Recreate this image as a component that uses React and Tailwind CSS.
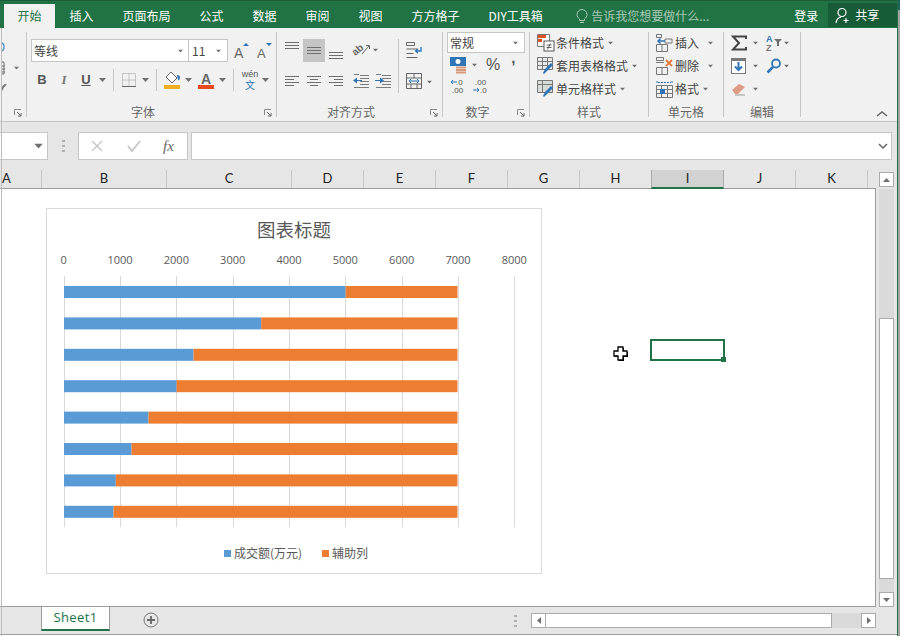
import React from "react";

const bars = [5000, 3500, 2300, 2000, 1500, 1200, 920, 880];
const ticks = [0, 1000, 2000, 3000, 4000, 5000, 6000, 7000, 8000];
const columns = [
  { name: "A", w: "w-[42px]", align: "pl-[2px]" },
  { name: "B", w: "w-[125px]" },
  { name: "C", w: "w-[125px]" },
  { name: "D", w: "w-[72px]" },
  { name: "E", w: "w-[72px]" },
  { name: "F", w: "w-[72px]" },
  { name: "G", w: "w-[72px]" },
  { name: "H", w: "w-[72px]" },
  { name: "I", w: "w-[73px]", active: true },
  { name: "J", w: "w-[72px]" },
  { name: "K", w: "w-[72px]" },
];

const Caret = ({ className = "" }) => (
  <svg width="7" height="4" viewBox="0 0 7 4" className={"shrink-0 " + className}>
    <path d="M0 0h7L3.5 4z" fill="#6f6f6f" />
  </svg>
);

const Launcher = () => (
  <svg width="8" height="8" viewBox="0 0 8 8" className="absolute right-[4px] bottom-0">
    <path d="M.5 6V.5H7" fill="none" stroke="#8a8a8a" />
    <path d="M3 3l4 4M7 4v3H4" fill="none" stroke="#666" />
  </svg>
);

const Lines = ({ rows }) => (
  <svg width="14" height="18" viewBox="0 0 14 18" className="shrink-0">
    {rows.map((r, i) => (
      <path key={i} d={`M${r[0]} ${r[2]}.5H${r[1]}`} stroke="#6e6e6e" />
    ))}
  </svg>
);

const Indent = ({ flip }) => (
  <svg width="16" height="14" viewBox="0 0 16 14" className="shrink-0 mt-[3px]">
    <path d="M7 1.500h9M7 4.500h9M7 7.500h9M7 10.500h9M1 13.500h15M1 .5h5" stroke="#6e6e6e" strokeWidth="0.9" />
    {flip ? (
      <path d="M0 6h5V3.500L9 6.500l-4 3V7H0z" fill="#2f74b5" />
    ) : (
      <path d="M9 6H4V3.500L0 6.500l4 3V7h5z" fill="#2f74b5" />
    )}
  </svg>
);

const TableIcon = ({ children }) => (
  <svg width="18" height="18" viewBox="0 0 18 18" className="shrink-0">
    {children}
  </svg>
);

const Group = ({ w, label, launcher, children }) => (
  <div className={`${w} h-[85px] mt-[4px] relative shrink-0 flex flex-col border-r border-[#c6c6c6]`}>
    <div className="flex-1 min-h-0">{children}</div>
    {label && (
      <div className={`h-[16px] -mb-[3px] text-center text-[12px] leading-[16px] text-[#666666] ${launcher ? "pr-[17px]" : ""}`}>
        {label}
      </div>
    )}
    {launcher && <Launcher />}
  </div>
);

const StyleRow = ({ icon, label, caretGap = "ml-[3px]" }) => (
  <div className="h-[23px] flex items-center pl-[7px]">
    {icon}
    <span className="ml-[1px] text-[12px] text-[#444444] whitespace-nowrap">{label}</span>
    <Caret className={caretGap + " scale-75"} />
  </div>
);

const Scrollbtn = ({ children, className = "" }) => (
  <div className={"bg-white border border-[#ababab] flex items-center justify-center shrink-0 " + className}>{children}</div>
);

function TopBar() {
  const tabs = ["插入", "页面布局", "公式", "数据", "审阅", "视图", "方方格子", "DIY工具箱"];
  return (
    <div className="h-[28px] bg-[#217346] border-t border-[#1a5c38] flex items-end pl-[4px] text-[12px] text-white shrink-0">
      <div className="w-[51px] h-[24px] bg-[#f1f1f1] text-[#217346] flex items-center justify-center">开始</div>
      {tabs.map((t) => (
        <div key={t} className="h-[24px] flex items-center px-[14.5px] whitespace-nowrap">
          {t}
        </div>
      ))}
      <div className="h-[24px] flex items-center ml-[19px] text-[#a6c9b5]">
        <svg width="12" height="16" viewBox="0 0 12 16" className="mr-[3px]">
          <path d="M3.500 11C2 9.800 1 8.300 1 6.500a5 5 0 0 1 10 0c0 1.800-1 3.300-2.500 4.500v1.500h-5z M4 14.500h4" fill="none" stroke="#a6c9b5" />
        </svg>
        <span className="whitespace-nowrap">告诉我您想要做什么...</span>
      </div>
      <div className="h-[24px] flex items-center ml-[85px] whitespace-nowrap">登录</div>
      <div className="h-[24px] w-[69px] ml-[10px] mb-[1px] bg-[#185c37] flex items-center pl-[7px] whitespace-nowrap">
        <svg width="16" height="17" viewBox="0 0 16 17" className="mr-[4px]">
          <circle cx="7" cy="5.500" r="4" fill="none" stroke="#fff" strokeWidth="1.200" />
          <path d="M1 16c.5-3.500 2.500-5.500 5-6M11 11v5M8.500 13.500h5" fill="none" stroke="#fff" strokeWidth="1.200" />
        </svg>
        共享
      </div>
      <div className="flex-1" />
    </div>
  );
}

function Ribbon() {
  return (
    <div className="h-[94px] bg-[#f1f1f1] border-b border-[#c6c6c6] flex shrink-0 text-[#444444]">
      {/* clipboard group, cut off at the window edge */}
      <Group w="w-[27px]" launcher>
        <div className="h-[66px] flex flex-col pl-[1px] pt-[10px] gap-[9px]">
          <svg width="4" height="10" viewBox="0 0 4 10">
            <path d="M0 1c2 0 3 1.500 3 4S2 9 0 9" fill="none" stroke="#4a8ec9" strokeWidth="1.300" />
          </svg>
          <div className="flex items-center h-[14px]">
            <svg width="5" height="14" viewBox="0 0 5 14">
              <path d="M0 1h3v12H0M0 5h4M0 8h4M0 11h4" fill="none" stroke="#707070" />
            </svg>
            <Caret className="ml-[7px] scale-75" />
          </div>
          <svg width="6" height="8" viewBox="0 0 6 8">
            <path d="M5 0L2 3 0 7" fill="none" stroke="#777" strokeWidth="2" />
          </svg>
        </div>
      </Group>

      <Group w="w-[250px]" label="字体" launcher>
        <div className="flex items-center pt-[7px] pl-[4px]">
          <div className="w-[158px] h-[23px] bg-white border border-[#c6c6c6] flex items-center justify-between pl-[2px] pr-[4px] text-[12px] text-[#444444]">
            等线
            <Caret className="scale-75" />
          </div>
          <div className="w-[40px] h-[23px] -ml-[1px] bg-white border border-[#c6c6c6] flex items-center justify-between pl-[3px] pr-[5px] text-[12px] text-[#444444]">
            11
            <Caret className="scale-75" />
          </div>
          <svg width="16" height="16" viewBox="0 0 16 16" className="ml-[6px] overflow-visible">
            <text x="0" y="15" fontSize="14" fill="#666" fontFamily="Liberation Sans">A</text>
            <path d="M9 3l3-3 3 3z" fill="#2f74b5" />
          </svg>
          <svg width="16" height="16" viewBox="0 0 16 16" className="ml-[7px] overflow-visible">
            <text x="0" y="15" fontSize="13" fill="#666" fontFamily="Liberation Sans">A</text>
            <path d="M9 0h6l-3 3z" fill="#2f74b5" />
          </svg>
        </div>
        <div className="flex items-center mt-[7px] pl-[10px] h-[22px]">
          <span className="w-[10px] text-center font-bold text-[13px] text-[#555555]" style={{ fontFamily: "Liberation Sans" }}>B</span>
          <span className="ml-[12px] w-[10px] text-center italic font-bold text-[13px] text-[#777777]" style={{ fontFamily: "Liberation Serif" }}>I</span>
          <span className="ml-[12px] w-[10px] text-center font-bold underline text-[13px] text-[#555555]" style={{ fontFamily: "Liberation Sans" }}>U</span>
          <Caret className="ml-[8px]" />
          <div className="ml-[7px] w-px h-[22px] bg-[#c6c6c6]" />
          <svg width="14" height="14" viewBox="0 0 14 14" className="ml-[8px]">
            <path d="M.5.500h13v13H.5zM7 .5v13M.5 7h13" fill="none" stroke="#9a9a9a" strokeDasharray="1 1" />
            <path d="M0 13.500h14" stroke="#666" />
          </svg>
          <Caret className="ml-[6px]" />
          <div className="ml-[7px] w-px h-[22px] bg-[#c6c6c6]" />
          <svg width="17" height="19" viewBox="0 0 17 19" className="ml-[7px]">
            <path d="M7 1l6 6-5 5-6-6z" fill="#fff" stroke="#666" />
            <path d="M13 4c2 0 3 1 3 2.500 0 1-.5 2-1 3-1-1-1.500-2-2-5.500z" fill="#2f74b5" />
            <rect x="0" y="14" width="16" height="4" fill="#f2b01e" />
          </svg>
          <Caret className="ml-[4px]" />
          <svg width="16" height="19" viewBox="0 0 16 19" className="ml-[6px] overflow-visible">
            <text x="3" y="13" fontSize="14" fontWeight="bold" fill="#666" fontFamily="Liberation Sans">A</text>
            <rect x="0" y="14" width="16" height="4" fill="#e8481c" />
          </svg>
          <Caret className="ml-[5px]" />
          <div className="ml-[7px] w-px h-[22px] bg-[#c6c6c6]" />
          <div className="ml-[8px] w-[16px] flex flex-col items-center leading-none">
            <span className="text-[9px] text-[#555555] leading-[9px]" style={{ fontFamily: "Liberation Sans" }}>wén</span>
            <span className="mt-[1px] text-[10px] text-[#2f74b5] leading-[10px]">文</span>
          </div>
          <Caret className="ml-[4px]" />
        </div>
      </Group>

      <Group w="w-[166px]" label="对齐方式" launcher>
        <div className="flex items-start pt-[7px] pl-[8px] h-[30px]">
          <div className="pt-[3px]">
            <Lines rows={[[0, 14, 0], [0, 14, 3], [0, 14, 6]]} />
          </div>
          <div className="ml-[4px] w-[22px] h-[23px] bg-[#c5c5c5] flex items-center justify-center">
            <Lines rows={[[0, 14, 5], [0, 14, 8], [0, 14, 11]]} />
          </div>
          <div className="ml-[4px] pt-[4px]">
            <Lines rows={[[0, 14, 9], [0, 14, 12], [0, 14, 15]]} />
          </div>
          <svg width="18" height="16" viewBox="0 0 18 16" className="ml-[10px] mt-[3px] overflow-visible">
            <text x="0" y="12" fontSize="10" fill="#666" transform="rotate(-40 4 10)" fontFamily="Liberation Sans" fontWeight="bold">ab</text>
            <path d="M9 12l7-8M13 3.500h3.500V7" fill="none" stroke="#666" />
          </svg>
          <Caret className="ml-[1px] mt-[9px] scale-75" />
          <div className="ml-[19px] w-px h-[32px] bg-[#c6c6c6]" />
          <svg width="17" height="17" viewBox="0 0 17 17" className="ml-[7px] mt-[3px]">
            <path d="M.5.500h8v3h-8zM.5 7h11M.5 11.500h7M.5 15.500h11" fill="none" stroke="#666" />
            <path d="M15 5v4h-5M12 7l-2.500 2 2.500 2" fill="none" stroke="#2f74b5" strokeWidth="1.300" />
          </svg>
        </div>
        <div className="flex items-start mt-[9px] pl-[8px] h-[30px]">
          <Lines rows={[[0, 14, 5], [0, 9, 8], [0, 14, 11], [0, 9, 14]]} />
          <div className="ml-[8px]">
            <Lines rows={[[0, 14, 5], [3, 11, 8], [0, 14, 11], [3, 11, 14]]} />
          </div>
          <div className="ml-[8px]">
            <Lines rows={[[0, 14, 5], [5, 14, 8], [0, 14, 11], [5, 14, 14]]} />
          </div>
          <div className="ml-[10px]"><Indent /></div>
          <div className="ml-[6px]"><Indent flip /></div>
          <div className="ml-[7px] w-px h-[22px] bg-[#c6c6c6]" />
          <svg width="16" height="16" viewBox="0 0 16 16" className="ml-[7px] mt-[2px]">
            <path d="M.5.500h15v15H.5zM.5 5h15M.5 11h15M8 .5V5M5 11v4.500M11 11v4.500" fill="none" stroke="#666" />
            <path d="M3 8h10M5 6L3 8l2 2M11 6l2 2-2 2" fill="none" stroke="#2f74b5" />
          </svg>
          <Caret className="ml-[4px] mt-[9px] scale-75" />
        </div>
      </Group>

      <Group w="w-[87px]" label="数字" launcher>
        <div className="pl-[4px]">
          <div className="w-[78px] h-[21px] bg-white border border-[#c6c6c6] flex items-center justify-between pl-[2px] pr-[5px] text-[12px] text-[#444444]">
            常规
            <Caret className="scale-75" />
          </div>
        </div>
        <div className="flex items-center mt-[3px] pl-[7px] h-[18px]">
          <svg width="17" height="17" viewBox="0 0 17 17">
            <rect x="0" y="0" width="16" height="9" fill="#2f74b5" />
            <circle cx="8" cy="4.500" r="2.500" fill="#fff" />
            <path d="M6 10.500h10M6 13h10M6 15.500h10" stroke="#d99a7c" strokeWidth="2" />
          </svg>
          <Caret className="ml-[4px] scale-75" />
          <span className="ml-[8px] text-[16px] leading-none text-[#555555]" style={{ fontFamily: "Liberation Sans" }}>%</span>
          <span className="ml-[11px] -translate-y-[8px] text-[15px] font-bold leading-none text-[#555555]" style={{ fontFamily: "Liberation Sans" }}>,</span>
        </div>
        <div className="flex items-center mt-[4px] pl-[7px]">
          <svg width="16" height="16" viewBox="0 0 16 16" className="overflow-visible">
            <path d="M7 4H1M3 2L1 4l2 2" fill="none" stroke="#2f74b5" />
            <text x="6" y="7" fontSize="8" fill="#555" fontFamily="Liberation Sans">.0</text>
            <text x="2" y="15" fontSize="8" fill="#555" fontFamily="Liberation Sans">.00</text>
          </svg>
          <svg width="16" height="16" viewBox="0 0 16 16" className="ml-[6px] overflow-visible">
            <text x="3" y="7" fontSize="8" fill="#555" fontFamily="Liberation Sans">.00</text>
            <path d="M1 12h6M5 10l2 2-2 2" fill="none" stroke="#2f74b5" />
            <text x="8" y="15" fontSize="8" fill="#555" fontFamily="Liberation Sans">.0</text>
          </svg>
        </div>
      </Group>

      <Group w="w-[119px]" label="样式">
        <div className="-mt-[1px]">
          <StyleRow
            label="条件格式"
            icon={
              <TableIcon>
                <path d="M.5.500h12v12H.5z" fill="#fff" stroke="#777" />
                <path d="M1 1h8v3H1zM1 5h4v3H1z" fill="#d9541e" />
                <rect x="7" y="7" width="10" height="10" fill="#fff" stroke="#555" />
                <path d="M9.500 11h5M9.500 13.500h5M13.500 9.500l-3 6" stroke="#444" strokeWidth="0.8" />
              </TableIcon>
            }
          />
          <StyleRow
            label="套用表格格式"
            icon={
              <TableIcon>
                <path d="M.5.500h15v12H.5zM.5 4.500h15M.5 8.500h15M5.500.5v12M10.500.5v12" fill="#e9e9e9" stroke="#777" />
                <path d="M16 8l-6 6-3 3-1-1 2-4 6-6z" fill="#2f74b5" />
              </TableIcon>
            }
          />
          <StyleRow
            label="单元格样式"
            icon={
              <TableIcon>
                <path d="M.5.500h15v12H.5zM.5 4.500h15M5.500.5v12" fill="#d8dcd8" stroke="#777" />
                <path d="M16 8l-6 6-3 3-1-1 2-4 6-6z" fill="#2f74b5" />
              </TableIcon>
            }
          />
        </div>
      </Group>

      <Group w="w-[75px]" label="单元格">
        <div className="-mt-[1px]">
          <StyleRow
            label="插入"
            caretGap="ml-[8px]"
            icon={
              <TableIcon>
                <path d="M.5 10.500h11v7H.5zM6 10.500v7M.5.500h5v3h-5zM9 5h7v4H9z" fill="none" stroke="#777" />
                <path d="M9 7H2M4.500 4.500L2 7l2.500 2.500" fill="none" stroke="#2f74b5" strokeWidth="1.500" />
              </TableIcon>
            }
          />
          <StyleRow
            label="删除"
            caretGap="ml-[8px]"
            icon={
              <TableIcon>
                <path d="M.5 10.500h11v7H.5zM6 10.500v7M.5.500h7v3h-7zM0 5.500h8" fill="none" stroke="#777" />
                <path d="M10 3l6 6M16 3l-6 6" stroke="#e5793a" strokeWidth="1.800" />
              </TableIcon>
            }
          />
          <StyleRow
            label="格式"
            caretGap="ml-[3px]"
            icon={
              <TableIcon>
                <path d="M1 1v3M16 1v3M2 2.500h13" fill="none" stroke="#2f74b5" strokeDasharray="2 1" />
                <path d="M.5 5.500h16v12H.5zM.5 9.500h16M.5 13.500h16M5.500 5.500v12M11.500 5.500v12" fill="none" stroke="#777" />
                <rect x="4" y="9" width="5" height="5" fill="#2f74b5" />
              </TableIcon>
            }
          />
        </div>
      </Group>

      <Group w="w-[77px]" label="编辑">
        <div className="pl-[7px] -mt-[1px]">
          <div className="h-[23px] flex items-center">
            <svg width="16" height="16" viewBox="0 0 16 16">
              <path d="M15 4V1.500H2L8 8l-6 6.500h13V12" fill="none" stroke="#444" strokeWidth="2" />
            </svg>
            <Caret className="ml-[5px] scale-75" />
            <svg width="16" height="17" viewBox="0 0 16 17" className="ml-[7px] overflow-visible">
              <text x="0" y="8" fontSize="9" fill="#2f74b5" fontFamily="Liberation Sans" fontWeight="bold">A</text>
              <text x="0" y="17" fontSize="9" fill="#777" fontFamily="Liberation Sans" fontWeight="bold">Z</text>
              <path d="M8 5h8l-3 3v4h-2V8z" fill="#6e6e6e" />
            </svg>
            <Caret className="ml-[1px] scale-75" />
          </div>
          <div className="h-[23px] flex items-center">
            <svg width="16" height="16" viewBox="0 0 16 16">
              <rect x=".5" y=".5" width="14" height="15" fill="#fff" stroke="#777" />
              <rect x="0" y="0" width="15" height="3" fill="#777" />
              <path d="M7.500 4v8M4 8.500l3.500 3.500L11 8.500" fill="none" stroke="#2f74b5" strokeWidth="2" />
            </svg>
            <Caret className="ml-[5px] scale-75" />
            <svg width="16" height="16" viewBox="0 0 16 16" className="ml-[7px]">
              <circle cx="10" cy="5.500" r="4" fill="none" stroke="#2f74b5" strokeWidth="1.800" />
              <path d="M7 9l-5.500 5.500" stroke="#2f74b5" strokeWidth="2.500" />
            </svg>
            <Caret className="ml-[1px] scale-75" />
          </div>
          <div className="h-[23px] flex items-center">
            <svg width="16" height="14" viewBox="0 0 16 14">
              <path d="M1 8l7-6 6 3-7 7H4z" fill="#dd9a84" />
              <path d="M4 13h10" stroke="#999" />
            </svg>
            <Caret className="ml-[5px] scale-75" />
          </div>
        </div>
      </Group>

      <div className="flex-1 flex items-end justify-end pb-[4px] pr-[14px]">
        <svg width="12" height="7" viewBox="0 0 12 7">
          <path d="M1 6l5-4 5 4" fill="none" stroke="#666" strokeWidth="1.500" />
        </svg>
      </div>
    </div>
  );
}

function FormulaBar() {
  return (
    <div className="h-[48px] flex items-center shrink-0 bg-[#e6e6e6]">
      <div className="w-[48px] h-[28px] bg-white border border-[#c6c6c6] border-l-0 flex items-center justify-end pr-[5px]">
        <Caret className="scale-125" />
      </div>
      <div className="ml-[14px] w-[3px] h-[12px] flex flex-col justify-between">
        <div className="h-[2px] bg-[#b0b0b0]" />
        <div className="h-[2px] bg-[#b0b0b0]" />
        <div className="h-[2px] bg-[#b0b0b0]" />
      </div>
      <div className="ml-[13px] w-[110px] h-[28px] bg-white border border-[#c6c6c6] flex items-center pl-[12px]">
        <svg width="12" height="12" viewBox="0 0 12 12">
          <path d="M1 1l10 10M11 1L1 11" stroke="#c8c8c8" strokeWidth="1.500" />
        </svg>
        <svg width="14" height="12" viewBox="0 0 14 12" className="ml-[24px]">
          <path d="M1 6l4 5 8-10" fill="none" stroke="#c8c8c8" strokeWidth="2" />
        </svg>
        <span className="ml-[22px] italic text-[15px] text-[#666666]" style={{ fontFamily: "Liberation Serif" }}>fx</span>
      </div>
      <div className="ml-[3px] w-[701px] h-[28px] bg-white border border-[#c6c6c6] flex items-center justify-end pr-[3px]">
        <svg width="10" height="7" viewBox="0 0 10 7">
          <path d="M1 1l4 4 4-4" fill="none" stroke="#666" strokeWidth="1.500" />
        </svg>
      </div>
    </div>
  );
}

function ColumnHeaders() {
  return (
    <div className="h-[19px] flex shrink-0 bg-[#e6e6e6] text-[13px] text-[#222222]" style={{ fontFamily: "Lato, sans-serif" }}>
      <div className="w-[876px] flex border-b border-[#9c9c9c]">
        {columns.map((c) => (
          <div
            key={c.name}
            className={`${c.w} shrink-0 flex items-center border-r ${c.active ? "bg-[#d2d2d2] border-[#ababab] border-l -ml-px border-b-2 border-b-[#217346] h-[19px]" : "border-[#c6c6c6]"} ${c.align ? c.align : "justify-center"}`}
          >
            {c.name}
          </div>
        ))}
      </div>
      <div className="ml-[3px] pt-[2px]">
        <Scrollbtn className="w-[15px] h-[15px]">
          <svg width="7" height="4" viewBox="0 0 7 4"><path d="M0 4h7L3.500 0z" fill="#6f6f6f" /></svg>
        </Scrollbtn>
      </div>
    </div>
  );
}

function Chart() {
  return (
    <div className="absolute left-[46px] top-[19px] w-[496px] h-[366px] bg-white border border-[#d9d9d9]">
      <svg width="494" height="364" viewBox="47 209 494 364" style={{ fontFamily: "Noto Sans CJK SC, sans-serif" }}>
        <text x="294" y="237" fontSize="18.500" fill="#595959" textAnchor="middle">图表标题</text>
        {ticks.map((t, i) => (
          <g key={t}>
            <text x={63.7 + i * 56.33} y="264" fontSize="11" fill="#595959" textAnchor="middle" style={{ fontFamily: "Open Sans, sans-serif" }}>{t}</text>
            <path d={`M${Math.round(63.7 + i * 56.33) + 0.5} 276V527`} stroke="#d9d9d9" />
          </g>
        ))}
        {bars.map((b, i) => {
          const y = 286 + i * 31.4;
          const end = 64 + b * 0.05633;
          return (
            <g key={b}>
              <rect x="64" y={y} width={end - 64} height="12" fill="#5b9bd5" />
              <rect x={end} y={y} width={457.5 - end} height="12" fill="#ed7d31" />
            </g>
          );
        })}
        <rect x="224" y="550" width="7" height="7" fill="#5b9bd5" />
        <text x="234" y="558" fontSize="12" fill="#595959">成交额(万元)</text>
        <rect x="322" y="550" width="7" height="7" fill="#ed7d31" />
        <text x="332" y="558" fontSize="12" fill="#595959">辅助列</text>
      </svg>
    </div>
  );
}

function SheetArea() {
  return (
    <div className="h-[418px] flex shrink-0 bg-[#e6e6e6]">
      <div className="w-[876px] relative bg-white border-r border-b border-[#9c9c9c] overflow-hidden">
        <Chart />
        <div className="absolute left-[650px] top-[150px] w-[75px] h-[22px] border-2 border-[#217346]">
          <div className="absolute -right-[3px] -bottom-[3px] w-[5px] h-[5px] bg-[#217346]" />
        </div>
        <svg width="16" height="16" viewBox="0 0 16 16" className="absolute left-[613px] top-[157px]">
          <path d="M6 2h5v4h4v5h-4v4H6v-4H2V6h4z" fill="#000" />
          <path d="M5 1h5v4h4v5h-4v4H5v-4H1V5h4z" fill="#fff" stroke="#000" strokeWidth="1.300" />
        </svg>
      </div>
      <div className="ml-[3px] w-[15px] flex flex-col h-[418px]">
        <div className="h-[129px] bg-[#dadada]" />
        <div className="h-[261px] bg-white border border-[#ababab]" />
        <div className="h-[13px] bg-[#dadada]" />
        <Scrollbtn className="w-[15px] h-[15px]">
          <Caret />
        </Scrollbtn>
      </div>
    </div>
  );
}

function BottomBar() {
  return (
    <div className="h-[28px] flex shrink-0 bg-[#e6e6e6] border-b border-[#9c9c9c]">
      <div className="ml-[41px] w-[69px] h-[25px] -mt-px bg-white border-x border-[#9c9c9c] border-b-2 border-b-[#217346] flex items-center justify-center text-[13px] tracking-[0.4px] text-[#217346]" style={{ fontFamily: "Open Sans, sans-serif" }}>
        Sheet1
      </div>
      <svg width="16" height="16" viewBox="0 0 16 16" className="ml-[33px] mt-[5px]">
        <circle cx="8" cy="8" r="7" fill="none" stroke="#777" />
        <path d="M4 8h8M8 4v8" stroke="#666" strokeWidth="1.800" />
      </svg>
      <div className="ml-[355px] mt-[8px] w-[3px] h-[12px] flex flex-col justify-between">
        <div className="h-[2px] bg-[#b0b0b0]" />
        <div className="h-[2px] bg-[#b0b0b0]" />
        <div className="h-[2px] bg-[#b0b0b0]" />
      </div>
      <div className="ml-[14px] mt-[6px] flex h-[15px]">
        <Scrollbtn className="w-[15px] h-[15px]">
          <svg width="4" height="7" viewBox="0 0 4 7"><path d="M4 0v7L0 3.500z" fill="#6f6f6f" /></svg>
        </Scrollbtn>
        <div className="w-[286px] h-[15px] bg-white border border-[#ababab] border-l-0" />
        <div className="w-[29px] h-[15px] bg-[#dadada]" />
        <Scrollbtn className="w-[15px] h-[15px]">
          <svg width="4" height="7" viewBox="0 0 4 7"><path d="M0 0v7l4-3.500z" fill="#6f6f6f" /></svg>
        </Scrollbtn>
      </div>
    </div>
  );
}

export default function App() {
  return (
    <div
      className="w-[902px] h-[636px] relative overflow-hidden bg-white flex flex-col"
      style={{ fontFamily: "Noto Sans CJK SC, sans-serif" }}
    >
      <TopBar />
      <Ribbon />
      <FormulaBar />
      <ColumnHeaders />
      <SheetArea />
      <BottomBar />
      <div className="absolute top-[28px] bottom-0 left-[1px] w-px bg-[#bdbdbd]" />
      <div className="absolute inset-y-0 right-0 w-[5px] bg-white">
        <div className="w-[3px] h-full bg-[#a3a3a3] border-l border-[#217346]">
          <div className="h-[10px] bg-[#1f5f5f]" />
        </div>
      </div>
    </div>
  );
}
